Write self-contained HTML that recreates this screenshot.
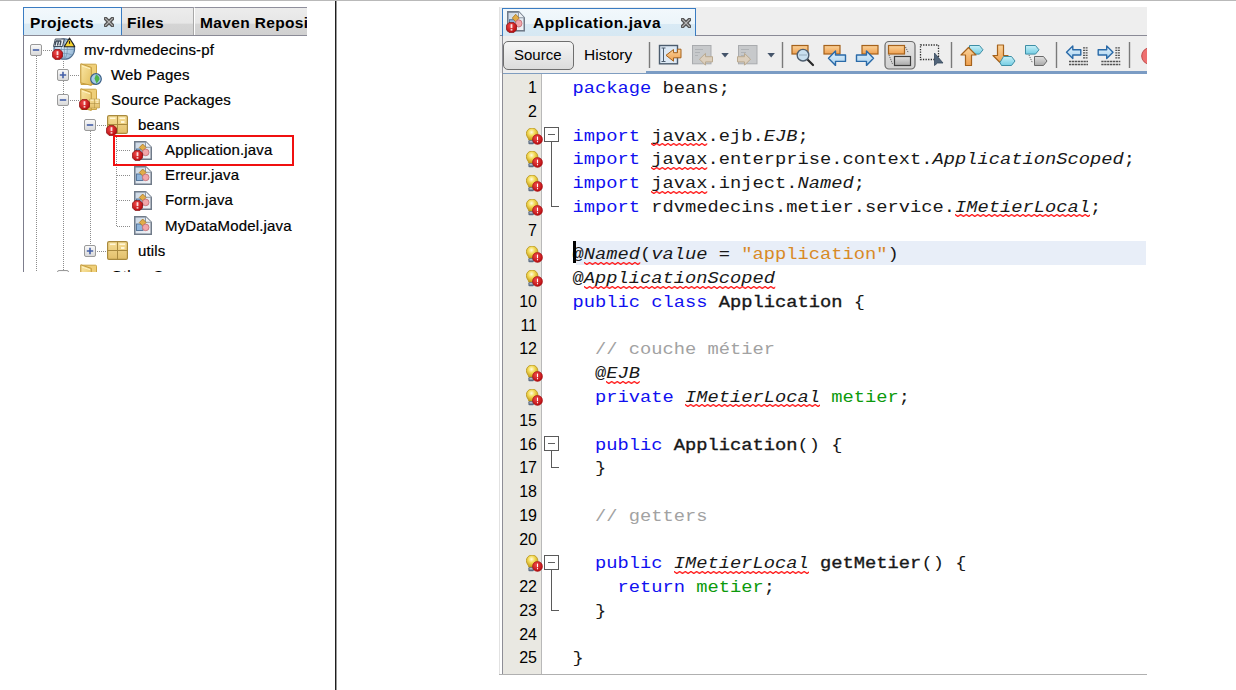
<!DOCTYPE html><html><head><meta charset="utf-8"><style>
*{margin:0;padding:0;box-sizing:border-box}
html,body{width:1236px;height:690px;overflow:hidden;background:#fff}
body{position:relative;font-family:"Liberation Sans",sans-serif}
.a{position:absolute}
.ln{position:absolute;left:0;height:23.76px;line-height:23.76px;font-family:"Liberation Mono",monospace;font-size:18.75px;white-space:pre;color:#181818;transform:scaleY(0.89);transform-origin:0 15px}
.k{color:#1010f0}
.i{font-style:italic}
.iw{font-style:italic}
.s{color:#d88a26}
.c{color:#a2a2a2}
.g{color:#0c9a0c}
.b{-webkit-text-stroke:0.4px #181818}
.num{position:absolute;width:37px;text-align:right;font-size:16px;color:#000;font-family:"Liberation Sans",sans-serif}
.tr{position:absolute;font-size:15px;letter-spacing:0.15px;-webkit-text-stroke:0.2px #000;color:#000;white-space:nowrap;line-height:20px}
.tab{position:absolute;font-weight:bold;font-size:15.5px;color:#000;white-space:nowrap;line-height:20px}
svg{position:absolute;overflow:visible}
</style></head><body>

<svg width="0" height="0" style="position:absolute">
<defs>
 <linearGradient id="gold" x1="0" y1="0" x2="0" y2="1"><stop offset="0" stop-color="#f6dd96"/><stop offset="1" stop-color="#e2bf6a"/></linearGradient>
 <linearGradient id="fold" x1="0" y1="0" x2="1" y2="1"><stop offset="0" stop-color="#fbe7a6"/><stop offset="1" stop-color="#e3bf5e"/></linearGradient>
 <linearGradient id="page" x1="0" y1="0" x2="1" y2="1"><stop offset="0" stop-color="#c9d6e4"/><stop offset="1" stop-color="#f4f6f8"/></linearGradient>
 <linearGradient id="btn" x1="0" y1="0" x2="0" y2="1"><stop offset="0" stop-color="#fafafa"/><stop offset="1" stop-color="#d8d8d8"/></linearGradient>
 <linearGradient id="orng" x1="0" y1="0" x2="0" y2="1"><stop offset="0" stop-color="#fbd39a"/><stop offset="1" stop-color="#eea050"/></linearGradient>
 <linearGradient id="bluA" x1="0" y1="0" x2="0" y2="1"><stop offset="0" stop-color="#e2f1fb"/><stop offset="1" stop-color="#a9d3f0"/></linearGradient>
 <linearGradient id="cyan" x1="0" y1="0" x2="0" y2="1"><stop offset="0" stop-color="#c7f0f8"/><stop offset="1" stop-color="#74cde3"/></linearGradient>
 <linearGradient id="btnp" x1="0" y1="0" x2="0" y2="1"><stop offset="0" stop-color="#e4e4e4"/><stop offset="1" stop-color="#d0d0d0"/></linearGradient>
 <linearGradient id="gray" x1="0" y1="0" x2="0" y2="1"><stop offset="0" stop-color="#e0e0e0"/><stop offset="1" stop-color="#a8a8a8"/></linearGradient>
 <pattern id="wave" x="0" y="0" width="5.66" height="3" patternUnits="userSpaceOnUse"><path d="M-2.83 2.5L0 0.5L2.83 2.5L5.66 0.5L8.49 2.5" stroke="#ff1010" stroke-width="1.3" fill="none"/></pattern>
 <symbol id="close" viewBox="0 0 10 10"><path d="M1.6 1.6L8.4 8.4M8.4 1.6L1.6 8.4" stroke="#555" stroke-width="3.8" stroke-linecap="round"/><path d="M1.6 1.6L8.4 8.4M8.4 1.6L1.6 8.4" stroke="#b4b4b4" stroke-width="1.3" stroke-linecap="round"/></symbol>
 <symbol id="err" viewBox="0 0 11 11"><path d="M3.2 0.4h4.6l2.8 2.8v4.6l-2.8 2.8h-4.6l-2.8-2.8v-4.6z" fill="url(#redg)" stroke="#7e0a0c" stroke-width="0.7"/><rect x="4.6" y="2.2" width="1.8" height="3.9" fill="#fff" opacity="0.85"/><rect x="4.6" y="7.1" width="1.8" height="1.5" fill="#fff" opacity="0.85"/></symbol>
 <symbol id="box" viewBox="0 0 12 12"><rect x="0.5" y="0.5" width="11" height="11" rx="1.5" fill="url(#btn)" stroke="#9a9a9a"/></symbol>
 <symbol id="pkg" viewBox="0 0 21 19"><rect x="0.6" y="0.6" width="19.8" height="17.8" rx="1.5" fill="url(#gold)" stroke="#a98a3e" stroke-width="1.2"/><path d="M10.5 0.6v17.8M0.6 9.5h19.8" stroke="#a98a3e" stroke-width="1"/><rect x="3" y="2.5" width="5.5" height="1.5" fill="#fff6d6"/><rect x="12.5" y="2.5" width="5.5" height="1.5" fill="#fff6d6"/><rect x="14" y="6" width="3.5" height="2" fill="#fff6d6"/></symbol>
 <symbol id="java" viewBox="0 0 18 19" preserveAspectRatio="none"><path d="M0.75 0.75h11l5.5 5.5v12h-16.5z" fill="url(#page)" stroke="#707b89" stroke-width="1.5"/><path d="M11.5 0.75v5.5h5.75" fill="#eef2f6" stroke="#8e98a5" stroke-width="1"/><rect x="2.5" y="8" width="6.5" height="6.5" fill="#8fb5dc" stroke="#4f6f94" stroke-width="0.9"/><path d="M8.7 3l3.4 3.5-3.4 3.5-3.4-3.5z" fill="#e2ac48" stroke="#a6782a" stroke-width="0.8"/><circle cx="11.7" cy="11.4" r="3.3" fill="#f2a6aa" stroke="#c06a72" stroke-width="0.8"/></symbol>
 <symbol id="folder" viewBox="0 0 17 23"><path d="M1 1.2h14.5a1 1 0 0 1 1 1v19.3h-15.5z" fill="#efcf78" stroke="#cba446" stroke-width="1"/><path d="M0.8 0.8l10.5 3.6v18l-10.5-2.5z" fill="url(#fold)" stroke="#c49a3c" stroke-width="1"/><path d="M2 3l8 2.7" stroke="#fff2c0" stroke-width="1"/></symbol>
 <radialGradient id="bulbg" cx="0.45" cy="0.35" r="0.6"><stop offset="0" stop-color="#fffbe0"/><stop offset="0.45" stop-color="#f4dc5a"/><stop offset="1" stop-color="#c9a21c"/></radialGradient>
 <radialGradient id="redg" cx="0.4" cy="0.35" r="0.65"><stop offset="0" stop-color="#f04a4a"/><stop offset="1" stop-color="#b80c10"/></radialGradient>
 <symbol id="bulb" viewBox="0 0 17 17"><path d="M0.3 5.8a5.8 5.8 0 0 1 11.6 0c0 2.6-2.1 3.9-2.6 6.4h-6.4c-0.5-2.5-2.6-3.8-2.6-6.4z" fill="url(#bulbg)" stroke="#b89418" stroke-width="0.8"/><rect x="2.4" y="12.2" width="5.5" height="4" rx="1" fill="#5a6b82"/><rect x="3.5" y="13.2" width="3.2" height="1.2" fill="#c8d2de"/><circle cx="11.5" cy="11.4" r="5" fill="url(#redg)" stroke="#9a0a0c" stroke-width="0.5"/><path d="M11.5 8.6v3.6" stroke="#fff" stroke-width="1.1"/><path d="M11.5 13.1v1.2" stroke="#fff" stroke-width="1.1"/></symbol>
</defs></svg>

<div class="a" style="left:0;top:0;width:1236px;height:1px;background:#b9b9b9"></div>
<div class="a" style="left:335px;top:1px;width:1px;height:689px;background:#1e1e1e"></div><div class="a" style="left:336px;top:1px;width:1px;height:689px;background:#9a9a9a"></div>
<div class="a" style="left:23px;top:7px;width:99px;height:29px;border:1px solid #3a7cc2;border-bottom:none;background:linear-gradient(#f2f8fc 0%,#ecf5fa 55%,#d9eaf5 56%,#d6e8f3 100%)"></div>
<div class="tab" style="left:30px;top:12.5px;letter-spacing:0.35px">Projects</div>
<svg style="left:104px;top:17px" width="10" height="10" viewBox="0 0 10 10"><use href="#close"/></svg>
<div class="a" style="left:122px;top:7px;width:72px;height:29px;border-top:1px solid #8f8f9c;border-right:1px solid #a8a8a8;background:linear-gradient(#ececec 0%,#e6e6e6 55%,#d5d5d5 56%,#d0d0d0 100%)"></div>
<div class="tab" style="left:127px;top:12.5px;letter-spacing:0.35px">Files</div>
<div class="a" style="left:194px;top:7px;width:113px;height:29px;border-top:1px solid #8f8f9c;border-left:1px solid #fff;background:linear-gradient(#ececec 0%,#e6e6e6 55%,#d5d5d5 56%,#d0d0d0 100%)"></div>
<div class="a" style="left:194px;top:7px;width:113px;height:29px;overflow:hidden"><div class="tab" style="left:6px;top:5.5px;letter-spacing:0.35px">Maven Repositories</div></div>
<div class="a" style="left:23px;top:35px;width:284px;height:1px;background:#8a8a96"></div>
<div class="a" style="left:23px;top:36px;width:1px;height:236px;background:#7d7d8c"></div>
<div class="a" style="left:24px;top:36px;width:283px;height:236px;overflow:hidden;background:#fff">
<div class="a" style="left:-24px;top:-36px;width:400px;height:400px">
<div class="a" style="left:36px;top:56px;width:1px;height:216px;background:repeating-linear-gradient(to bottom,#8c8c8c 0 1px,transparent 1px 2px)"></div>
<div class="a" style="left:63px;top:61px;width:1px;height:211px;background:repeating-linear-gradient(to bottom,#8c8c8c 0 1px,transparent 1px 2px)"></div>
<div class="a" style="left:90px;top:131px;width:1px;height:114px;background:repeating-linear-gradient(to bottom,#8c8c8c 0 1px,transparent 1px 2px)"></div>
<div class="a" style="left:116px;top:137px;width:1px;height:89px;background:repeating-linear-gradient(to bottom,#8c8c8c 0 1px,transparent 1px 2px)"></div>
<svg style="left:30px;top:44px" width="12" height="12"><use href="#box"/></svg>
<svg style="left:30px;top:44px" width="12" height="12" viewBox="0 0 12 12"><path d="M2.8 6h6.4" stroke="#4560a8" stroke-width="1.6"/></svg>
<div class="a" style="left:43px;top:50px;width:9px;height:1px;background:repeating-linear-gradient(to right,#8c8c8c 0 1px,transparent 1px 2px)"></div>
<svg style="left:52px;top:37px" width="24" height="24" viewBox="0 0 24 24"><defs><radialGradient id="glb" cx="0.4" cy="0.4" r="0.7"><stop offset="0" stop-color="#dcecf8"/><stop offset="1" stop-color="#8fb3d3"/></radialGradient></defs><circle cx="12.3" cy="12" r="10.3" fill="url(#glb)" stroke="#4e6c8c" stroke-width="1.1"/><path d="M2.5 12.5h19.5M12.3 2v20M4.5 6.5c5 2.2 10.5 2.2 15.5 0M4.5 18c5-2.2 10.5-2.2 15.5 0M12.3 2c-4 3-4 17 0 20M12.3 2c4 3 4 17 0 20" stroke="#6f90ae" stroke-width="0.7" fill="none"/><path d="M1.5 9.5l1.8-7.5h9l-1.8 7.5z" fill="#e6ecf2" stroke="#3f4b5a" stroke-width="1"/><path d="M3 8.5l1-4.5M5.5 8.5l1-4.5M8 8.5l1-4.5M4 4h5.3" stroke="#3f4b5a" stroke-width="1.3" fill="none"/><path d="M17.5 1l5.3 8.8h-10.6z" fill="#f7d531" stroke="#222" stroke-width="1.1" stroke-linejoin="round"/><path d="M17.5 3.8v3" stroke="#222" stroke-width="1.2"/></svg>
<svg style="left:52px;top:49px" width="11" height="11"><use href="#err"/></svg>
<div class="tr" style="left:84px;top:40px">mv-rdvmedecins-pf</div>
<svg style="left:57px;top:69px" width="12" height="12"><use href="#box"/></svg>
<svg style="left:57px;top:69px" width="12" height="12" viewBox="0 0 12 12"><path d="M2.8 6h6.4M6 2.8v6.4" stroke="#4560a8" stroke-width="1.6"/></svg>
<div class="a" style="left:70px;top:75px;width:9px;height:1px;background:repeating-linear-gradient(to right,#8c8c8c 0 1px,transparent 1px 2px)"></div>
<svg style="left:80px;top:63px" width="17" height="23"><use href="#folder"/></svg>
<svg style="left:90px;top:73px" width="12" height="12" viewBox="0 0 12 12"><circle cx="6" cy="6" r="5.3" fill="#a8cbea" stroke="#3a5f86" stroke-width="1.2"/><path d="M6 1.5c2 1 4 2.5 3.5 5-1 1.5-2 3-3 4-0.5-2-1.5-3-2-5z" fill="#4bb34b"/></svg>
<div class="tr" style="left:111px;top:65px">Web Pages</div>
<svg style="left:57px;top:94px" width="12" height="12"><use href="#box"/></svg>
<svg style="left:57px;top:94px" width="12" height="12" viewBox="0 0 12 12"><path d="M2.8 6h6.4" stroke="#4560a8" stroke-width="1.6"/></svg>
<div class="a" style="left:70px;top:100px;width:9px;height:1px;background:repeating-linear-gradient(to right,#8c8c8c 0 1px,transparent 1px 2px)"></div>
<svg style="left:80px;top:88px" width="17" height="23"><use href="#folder"/></svg>
<svg style="left:89px;top:98px" width="11" height="11" viewBox="0 0 21 19"><use href="#pkg"/></svg>
<svg style="left:79px;top:99px" width="11" height="11"><use href="#err"/></svg>
<div class="tr" style="left:111px;top:90px">Source Packages</div>
<svg style="left:84px;top:119px" width="12" height="12"><use href="#box"/></svg>
<svg style="left:84px;top:119px" width="12" height="12" viewBox="0 0 12 12"><path d="M2.8 6h6.4" stroke="#4560a8" stroke-width="1.6"/></svg>
<div class="a" style="left:97px;top:125px;width:9px;height:1px;background:repeating-linear-gradient(to right,#8c8c8c 0 1px,transparent 1px 2px)"></div>
<svg style="left:107px;top:115px" width="21" height="19"><use href="#pkg"/></svg>
<svg style="left:106px;top:125px" width="11" height="11"><use href="#err"/></svg>
<div class="tr" style="left:138px;top:115px">beans</div>
<div class="a" style="left:117px;top:150px;width:13px;height:1px;background:repeating-linear-gradient(to right,#8c8c8c 0 1px,transparent 1px 2px)"></div>
<svg style="left:133.7px;top:140.7px" width="18" height="19"><use href="#java"/></svg>
<svg style="left:132px;top:150px" width="11" height="11"><use href="#err"/></svg>
<div class="tr" style="left:165px;top:140px">Application.java</div>
<div class="a" style="left:117px;top:175px;width:13px;height:1px;background:repeating-linear-gradient(to right,#8c8c8c 0 1px,transparent 1px 2px)"></div>
<svg style="left:133.7px;top:166.0px" width="18" height="19"><use href="#java"/></svg>
<div class="tr" style="left:165px;top:165px">Erreur.java</div>
<div class="a" style="left:117px;top:200px;width:13px;height:1px;background:repeating-linear-gradient(to right,#8c8c8c 0 1px,transparent 1px 2px)"></div>
<svg style="left:133.7px;top:191.2px" width="18" height="19"><use href="#java"/></svg>
<svg style="left:132px;top:200px" width="11" height="11"><use href="#err"/></svg>
<div class="tr" style="left:165px;top:190px">Form.java</div>
<div class="a" style="left:117px;top:226px;width:13px;height:1px;background:repeating-linear-gradient(to right,#8c8c8c 0 1px,transparent 1px 2px)"></div>
<svg style="left:133.7px;top:216.4px" width="18" height="19"><use href="#java"/></svg>
<div class="tr" style="left:165px;top:216px">MyDataModel.java</div>
<svg style="left:84px;top:245px" width="12" height="12"><use href="#box"/></svg>
<svg style="left:84px;top:245px" width="12" height="12" viewBox="0 0 12 12"><path d="M2.8 6h6.4M6 2.8v6.4" stroke="#4560a8" stroke-width="1.6"/></svg>
<div class="a" style="left:97px;top:251px;width:9px;height:1px;background:repeating-linear-gradient(to right,#8c8c8c 0 1px,transparent 1px 2px)"></div>
<svg style="left:107px;top:241px" width="21" height="19"><use href="#pkg"/></svg>
<div class="tr" style="left:138px;top:241px">utils</div>
<svg style="left:57px;top:270px" width="12" height="12"><use href="#box"/></svg>
<svg style="left:57px;top:270px" width="12" height="12" viewBox="0 0 12 12"><path d="M2.8 6h6.4M6 2.8v6.4" stroke="#4560a8" stroke-width="1.6"/></svg>
<div class="a" style="left:70px;top:276px;width:9px;height:1px;background:repeating-linear-gradient(to right,#8c8c8c 0 1px,transparent 1px 2px)"></div>
<svg style="left:80px;top:264px" width="17" height="23"><use href="#folder"/></svg>
<div class="tr" style="left:111px;top:266px">Other Sources</div>
<div class="a" style="left:113px;top:135px;width:181px;height:31px;border:2px solid #f01010"></div>
</div></div>
<div class="a" style="left:499px;top:7px;width:648px;height:29px;background:#eeeeee"></div>
<div class="a" style="left:499px;top:35px;width:648px;height:1px;background:#8a8a96"></div>
<div class="a" style="left:502px;top:8px;width:194px;height:28px;border:1px solid #3a7cc2;border-bottom:none;background:linear-gradient(#f2f8fc 0%,#ecf5fa 55%,#d9eaf5 56%,#d6e8f3 100%)"></div>
<svg style="left:507.4px;top:11.3px" width="18" height="20.7"><use href="#java"/></svg>
<svg style="left:506px;top:22px" width="11" height="11"><use href="#err"/></svg>
<div class="tab" style="left:533px;top:12.5px;letter-spacing:0.58px">Application.java</div>
<svg style="left:681px;top:18px" width="10" height="10" viewBox="0 0 10 10"><use href="#close"/></svg>
<div class="a" style="left:499px;top:36px;width:648px;height:37px;background:#eeeeee"></div>
<div class="a" style="left:503px;top:41px;width:71px;height:29px;border:1px solid #6e6e6e;border-radius:5px;background:linear-gradient(#f5f5f5,#dcdcdc)"></div>
<div class="a" style="left:514px;top:44.5px;font-size:15px;line-height:20px">Source</div>
<div class="a" style="left:584px;top:44.5px;font-size:15.5px;line-height:20px">History</div>
<div class="a" style="left:646px;top:71px;width:501px;height:3px;background:#7b9cc4"></div>
<div class="a" style="left:502px;top:73px;width:144px;height:1px;background:#7f9dc0"></div>
<div class="a" style="left:502px;top:74px;width:645px;height:600px;background:#fff"></div>
<div class="a" style="left:502px;top:74px;width:40px;height:600px;background:#e9e8e2;border-left:1px solid #8e8e96;border-right:1px solid #b9b9b9"></div>
<div class="a" style="left:499px;top:674px;width:648px;height:1px;background:#b0b0b0"></div>
<div class="a" style="left:499px;top:7px;width:1px;height:667px;background:#e2e2e2"></div>
<div class="a" style="left:502px;top:36px;width:1px;height:38px;background:#8e8e96"></div>
<svg style="left:499px;top:36px;overflow:hidden" width="648" height="35" viewBox="499 36 648 35">
<line x1="649.5" y1="42" x2="649.5" y2="68" stroke="#7a7a7a" stroke-width="1.4"/>
<line x1="782.5" y1="42" x2="782.5" y2="68" stroke="#7a7a7a" stroke-width="1.4"/>
<line x1="951.5" y1="42" x2="951.5" y2="68" stroke="#7a7a7a" stroke-width="1.4"/>
<line x1="1056.5" y1="42" x2="1056.5" y2="68" stroke="#7a7a7a" stroke-width="1.4"/>
<line x1="1129.5" y1="42" x2="1129.5" y2="68" stroke="#7a7a7a" stroke-width="1.4"/>
<rect x="659.5" y="45.5" width="18" height="18.3" fill="#dde9f5" stroke="#4c5c6e" stroke-width="1.4"/>
<path d="M661.5 48h4M663.5 48v13.5M661.5 61.5h4" stroke="#4c5c6e" stroke-width="1" fill="none"/>
<path d="M666 55.3l7.5-5.8v3.2h4v-3.5h3.5v8.6h-7.5v3.4z" fill="url(#orng)" stroke="#a5621c" stroke-width="1"/>
<rect x="692.5" y="45.5" width="18.5" height="18.3" fill="#c7c9cb" stroke="#a9abae" stroke-width="1"/>
<path d="M695 49.5h8M695 52.5h5M695 55.5h3" stroke="#b0b3b6" stroke-width="1"/>
<path d="M699.5 59.2l6-5.8v3.3h7v5.2h-7v3.3z" fill="#dccfbd" stroke="#b9a98f" stroke-width="1"/>
<path d="M721.3 53h7.5l-3.75 4.5z" fill="#44546a"/>
<rect x="738.5" y="45.5" width="18.5" height="18.3" fill="#c7c9cb" stroke="#a9abae" stroke-width="1"/>
<path d="M741 49.5h8M741 52.5h5M741 55.5h3" stroke="#b0b3b6" stroke-width="1"/>
<path d="M750.5 59.2l-6-5.8v3.3h-7v5.2h7v3.3z" fill="#dccfbd" stroke="#b9a98f" stroke-width="1"/>
<path d="M767.4 53h7.5l-3.75 4.5z" fill="#44546a"/>
<rect x="792" y="45.5" width="16" height="8.5" fill="url(#orng)" stroke="#a5621c" stroke-width="1.2"/>
<line x1="807" y1="59" x2="813" y2="65" stroke="#2a2a2a" stroke-width="2.2" stroke-linecap="round"/>
<circle cx="803" cy="55.2" r="5.8" fill="#c9dfee" stroke="#4f5f70" stroke-width="1.4"/>
<line x1="799" y1="55" x2="807" y2="55" stroke="#8aa0b0" stroke-width="0.8"/>
<rect x="824" y="45.5" width="16" height="8.5" fill="url(#orng)" stroke="#a5621c" stroke-width="1.2"/>
<path d="M828.5 58.2l7-7.2v4h10v6.4h-10v4z" fill="url(#bluA)" stroke="#2a6aa8" stroke-width="1.4" stroke-linejoin="round"/>
<rect x="862" y="45.5" width="16" height="8.5" fill="url(#orng)" stroke="#a5621c" stroke-width="1.2"/>
<path d="M873.5 58.2l-7-7.2v4h-10v6.4h10v4z" fill="url(#bluA)" stroke="#2a6aa8" stroke-width="1.4" stroke-linejoin="round"/>
<rect x="885" y="41.5" width="30" height="27.5" rx="4" fill="url(#btnp)" stroke="#6a6a6a" stroke-width="1.2"/>
<rect x="888.5" y="45.5" width="16" height="8.5" fill="url(#orng)" stroke="#a5621c" stroke-width="1.2"/>
<rect x="894.5" y="56.5" width="16" height="9" fill="url(#gray)" stroke="#3e3e3e" stroke-width="1.2"/>
<path d="M905.5 47l3 6M889 55l3.5 9" stroke="#404040" stroke-width="0.8" stroke-dasharray="1.2 1"/>
<rect x="920.5" y="45" width="18" height="14.5" fill="none" stroke="#2c2c2c" stroke-width="1.3" stroke-dasharray="1.3 1.3"/>
<path d="M934.5 53v12.5l3-2.5 5.5 0z" fill="#52657a" stroke="#34475c" stroke-width="0.8"/>
<path d="M969.5 45.5h10l3.5 4.3-3.5 4.3h-10z" fill="url(#cyan)" stroke="#3e8ea5" stroke-width="1"/>
<path d="M968.5 47.5l7.5 7.5h-4.5v10.5h-6v-10.5h-4.5z" fill="url(#orng)" stroke="#a5621c" stroke-width="1.2" stroke-linejoin="round"/>
<path d="M997.5 45h6v10.5h4.5l-7.5 7.5-7.5-7.5h4.5z" fill="url(#orng)" stroke="#a5621c" stroke-width="1.2" stroke-linejoin="round"/>
<path d="M1003.5 56.5h8l3.5 4.5-3.5 4.5h-10l-1.5-3z" fill="url(#cyan)" stroke="#3e8ea5" stroke-width="1"/>
<path d="M1025.5 45.5h10l3.5 4.3-3.5 4.3h-10z" fill="url(#cyan)" stroke="#3e8ea5" stroke-width="1"/>
<path d="M1034.5 56.5h9l3.5 4.5-3.5 4.5h-9z" fill="url(#gray)" stroke="#6a6a6a" stroke-width="1"/>
<path d="M1029 55l3.5 8" stroke="#404040" stroke-width="0.8" stroke-dasharray="1.2 1"/>
<path d="M1066.5 52.3l6.3-6.2v3.6h8v5.3h-8v3.6z" fill="url(#bluA)" stroke="#2a6aa8" stroke-width="1.4" stroke-linejoin="round"/>
<line x1="1083" y1="47.8" x2="1088" y2="47.8" stroke="#555" stroke-width="1.3" stroke-dasharray="2 0.6"/>
<line x1="1083" y1="50.3" x2="1088" y2="50.3" stroke="#555" stroke-width="1.3" stroke-dasharray="2 0.6"/>
<line x1="1083" y1="52.8" x2="1088" y2="52.8" stroke="#555" stroke-width="1.3" stroke-dasharray="2 0.6"/>
<line x1="1083" y1="55.3" x2="1088" y2="55.3" stroke="#555" stroke-width="1.3" stroke-dasharray="2 0.6"/>
<line x1="1083" y1="57.8" x2="1088" y2="57.8" stroke="#555" stroke-width="1.3" stroke-dasharray="2 0.6"/>
<line x1="1069" y1="61.5" x2="1088" y2="61.5" stroke="#555" stroke-width="1.6" stroke-dasharray="2.3 0.6"/>
<line x1="1069" y1="64.5" x2="1088" y2="64.5" stroke="#555" stroke-width="1.6" stroke-dasharray="2.3 0.6"/>
<path d="M1113 52.3l-6.3-6.2v3.6h-8.5v5.3h8.5v3.6z" fill="url(#bluA)" stroke="#2a6aa8" stroke-width="1.4" stroke-linejoin="round"/>
<line x1="1115.3" y1="47.8" x2="1120.3" y2="47.8" stroke="#555" stroke-width="1.3" stroke-dasharray="2 0.6"/>
<line x1="1115.3" y1="50.3" x2="1120.3" y2="50.3" stroke="#555" stroke-width="1.3" stroke-dasharray="2 0.6"/>
<line x1="1115.3" y1="52.8" x2="1120.3" y2="52.8" stroke="#555" stroke-width="1.3" stroke-dasharray="2 0.6"/>
<line x1="1115.3" y1="55.3" x2="1120.3" y2="55.3" stroke="#555" stroke-width="1.3" stroke-dasharray="2 0.6"/>
<line x1="1115.3" y1="57.8" x2="1120.3" y2="57.8" stroke="#555" stroke-width="1.3" stroke-dasharray="2 0.6"/>
<line x1="1101.3" y1="61.5" x2="1120.3" y2="61.5" stroke="#555" stroke-width="1.6" stroke-dasharray="2.3 0.6"/>
<line x1="1101.3" y1="64.5" x2="1120.3" y2="64.5" stroke="#555" stroke-width="1.6" stroke-dasharray="2.3 0.6"/>
<circle cx="1150" cy="56" r="8.3" fill="#ee7070" stroke="#c04a4a" stroke-width="1"/>
</svg>
<div class="num" style="left:500px;top:76.10px;line-height:23.76px">1</div>
<div class="ln" style="left:572.50px;top:77.10px"><span class="k">package</span> beans;</div>
<div class="num" style="left:500px;top:99.86px;line-height:23.76px">2</div>
<svg style="left:526px;top:127.62px" width="17" height="17"><use href="#bulb"/></svg>
<div class="ln" style="left:572.50px;top:124.62px"><span class="k">import</span> javax.ejb.<span class="i">EJB</span>;</div>
<svg style="left:651.25px;top:143.02px" width="56.25" height="3"><rect x="0" y="0" width="56.25" height="3" fill="url(#wave)"/></svg>
<svg style="left:526px;top:151.38px" width="17" height="17"><use href="#bulb"/></svg>
<div class="ln" style="left:572.50px;top:148.38px"><span class="k">import</span> javax.enterprise.context.<span class="i">ApplicationScoped</span>;</div>
<svg style="left:651.25px;top:166.78px" width="56.25" height="3"><rect x="0" y="0" width="56.25" height="3" fill="url(#wave)"/></svg>
<svg style="left:526px;top:175.14px" width="17" height="17"><use href="#bulb"/></svg>
<div class="ln" style="left:572.50px;top:172.14px"><span class="k">import</span> javax.inject.<span class="i">Named</span>;</div>
<svg style="left:651.25px;top:190.54px" width="56.25" height="3"><rect x="0" y="0" width="56.25" height="3" fill="url(#wave)"/></svg>
<svg style="left:526px;top:198.90px" width="17" height="17"><use href="#bulb"/></svg>
<div class="ln" style="left:572.50px;top:195.90px"><span class="k">import</span> rdvmedecins.metier.service.<span class="iw">IMetierLocal</span>;</div>
<svg style="left:955.00px;top:214.30px" width="135.00" height="3"><rect x="0" y="0" width="135.00" height="3" fill="url(#wave)"/></svg>
<div class="num" style="left:500px;top:218.66px;line-height:23.76px">7</div>
<div class="a" style="left:576px;top:241.42px;width:570px;height:23.76px;background:#e8eef8"></div>
<svg style="left:526px;top:246.42px" width="17" height="17"><use href="#bulb"/></svg>
<div class="ln" style="left:572.50px;top:243.42px">@<span class="iw">Named</span>(<span class="i">value</span> = <span class="s">"application"</span>)</div>
<svg style="left:583.75px;top:261.82px" width="56.25" height="3"><rect x="0" y="0" width="56.25" height="3" fill="url(#wave)"/></svg>
<svg style="left:526px;top:270.18px" width="17" height="17"><use href="#bulb"/></svg>
<div class="ln" style="left:572.50px;top:267.18px">@<span class="iw">ApplicationScoped</span></div>
<svg style="left:583.75px;top:285.58px" width="191.25" height="3"><rect x="0" y="0" width="191.25" height="3" fill="url(#wave)"/></svg>
<div class="num" style="left:500px;top:289.94px;line-height:23.76px">10</div>
<div class="ln" style="left:572.50px;top:290.94px"><span class="k">public class</span> <span class="b">Application</span> {</div>
<div class="num" style="left:500px;top:313.70px;line-height:23.76px">11</div>
<div class="num" style="left:500px;top:337.46px;line-height:23.76px">12</div>
<div class="ln" style="left:572.50px;top:338.46px"><span class="c">  // couche métier</span></div>
<svg style="left:526px;top:365.22px" width="17" height="17"><use href="#bulb"/></svg>
<div class="ln" style="left:572.50px;top:362.22px">  @<span class="iw">EJB</span></div>
<svg style="left:606.25px;top:380.62px" width="33.75" height="3"><rect x="0" y="0" width="33.75" height="3" fill="url(#wave)"/></svg>
<svg style="left:526px;top:388.98px" width="17" height="17"><use href="#bulb"/></svg>
<div class="ln" style="left:572.50px;top:385.98px">  <span class="k">private</span> <span class="iw">IMetierLocal</span> <span class="g">metier</span>;</div>
<svg style="left:685.00px;top:404.38px" width="135.00" height="3"><rect x="0" y="0" width="135.00" height="3" fill="url(#wave)"/></svg>
<div class="num" style="left:500px;top:408.74px;line-height:23.76px">15</div>
<div class="num" style="left:500px;top:432.50px;line-height:23.76px">16</div>
<div class="ln" style="left:572.50px;top:433.50px">  <span class="k">public</span> <span class="b">Application</span>() {</div>
<div class="num" style="left:500px;top:456.26px;line-height:23.76px">17</div>
<div class="ln" style="left:572.50px;top:457.26px">  }</div>
<div class="num" style="left:500px;top:480.02px;line-height:23.76px">18</div>
<div class="num" style="left:500px;top:503.78px;line-height:23.76px">19</div>
<div class="ln" style="left:572.50px;top:504.78px"><span class="c">  // getters</span></div>
<div class="num" style="left:500px;top:527.54px;line-height:23.76px">20</div>
<svg style="left:526px;top:555.30px" width="17" height="17"><use href="#bulb"/></svg>
<div class="ln" style="left:572.50px;top:552.30px">  <span class="k">public</span> <span class="iw">IMetierLocal</span> <span class="b">getMetier</span>() {</div>
<svg style="left:673.75px;top:570.70px" width="135.00" height="3"><rect x="0" y="0" width="135.00" height="3" fill="url(#wave)"/></svg>
<div class="num" style="left:500px;top:575.06px;line-height:23.76px">22</div>
<div class="ln" style="left:572.50px;top:576.06px">    <span class="k">return</span> <span class="g">metier</span>;</div>
<div class="num" style="left:500px;top:598.82px;line-height:23.76px">23</div>
<div class="ln" style="left:572.50px;top:599.82px">  }</div>
<div class="num" style="left:500px;top:622.58px;line-height:23.76px">24</div>
<div class="num" style="left:500px;top:646.34px;line-height:23.76px">25</div>
<div class="ln" style="left:572.50px;top:647.34px">}</div>
<div class="a" style="left:544px;top:127px;width:15px;height:15px;border:1px solid #5a5a5a;background:#fff"></div><div class="a" style="left:548px;top:134px;width:7px;height:1px;background:#606060"></div>
<div class="a" style="left:551px;top:142px;width:1px;height:64px;background:#5a5a5a"></div><div class="a" style="left:551px;top:206px;width:8px;height:1px;background:#5a5a5a"></div>
<div class="a" style="left:544px;top:436px;width:15px;height:15px;border:1px solid #5a5a5a;background:#fff"></div><div class="a" style="left:548px;top:443px;width:7px;height:1px;background:#606060"></div>
<div class="a" style="left:551px;top:451px;width:1px;height:16px;background:#5a5a5a"></div><div class="a" style="left:551px;top:467px;width:8px;height:1px;background:#5a5a5a"></div>
<div class="a" style="left:544px;top:555px;width:15px;height:15px;border:1px solid #5a5a5a;background:#fff"></div><div class="a" style="left:548px;top:562px;width:7px;height:1px;background:#606060"></div>
<div class="a" style="left:551px;top:570px;width:1px;height:40px;background:#5a5a5a"></div><div class="a" style="left:551px;top:610px;width:8px;height:1px;background:#5a5a5a"></div>
<div class="a" style="left:573px;top:241px;width:3px;height:22px;background:#000"></div>
</body></html>
